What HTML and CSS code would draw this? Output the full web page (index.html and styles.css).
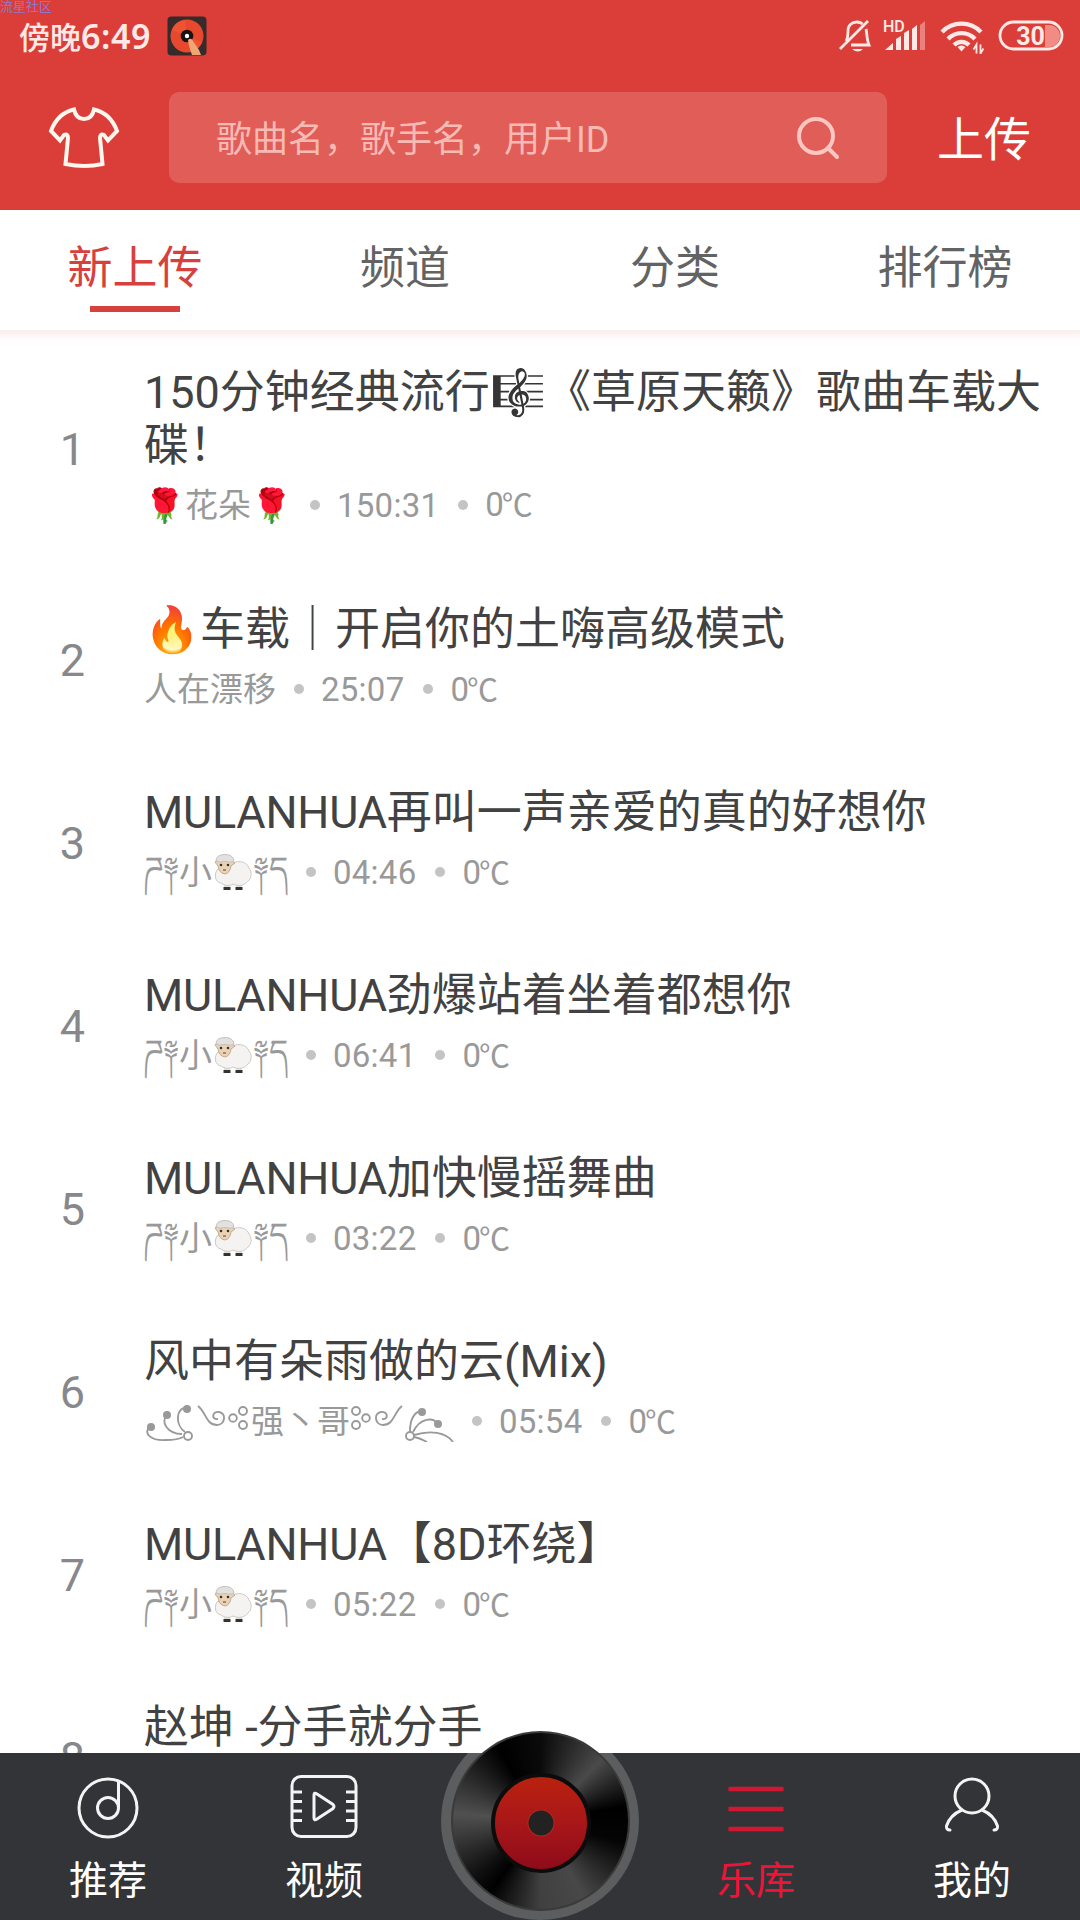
FILE: index.html
```
<!DOCTYPE html>
<html lang="zh-CN">
    <head>
        <meta charset="UTF-8" />
        <meta name="viewport" content="width=device-width, initial-scale=1.0" />
        <title>新上传</title>
        <link rel="stylesheet" href="styles.css">
    </head>
    <body>
        <span class="watermark">流星社区</span>
        <header class="header">
            <div class="status-bar">
                <span class="clock">傍晚<b>6:49</b></span>
                <svg class="app-badge" width="40" height="40" viewBox="0 0 40 40">
                    <rect x="0.5" y="0.5" width="39" height="39" rx="4" fill="#352b2b" />
                    <circle cx="20" cy="20" r="16.5" fill="#e8492e" />
                    <path d="M20 20 L5 14 A16.5 16.5 0 0 1 18 4Z M20 20 L35 26 A16.5 16.5 0 0 1 27 35Z" fill="#ee5333" />
                    <circle cx="20" cy="20" r="6.3" fill="#181414" />
                    <circle cx="20" cy="20" r="2.2" fill="#fff" />
                    <path d="M21 24 q3 -3 5 1 l6 9 l2 5 h-9 l-3 -9z" fill="#f0a575" />
                </svg>
                <svg class="status-icons" width="226" height="36" viewBox="0 0 226 36" fill="none" stroke="#ffe9e6" stroke-width="2.8">
                    <!-- muted bell -->
                    <path d="M7 23 c2-3 2-6 2-10 c0-6 4-9 9-9 c2 0 4 .6 5.500 2 M27 11 c1 3 .5 10 3 16 H12 M1 31 L29 3" />
                    <path d="M13 31 h11 q-5 5-11 0z" fill="#ffe9e6" stroke="none" />
                    <!-- signal -->
                    <text x="44" y="14" class="hd">HD</text>
                    <g fill="#ffe9e6" stroke="none">
                        <path d="M46 32 l8 -7 v7z M57 32 v-11 l5-3 v14z M65 32 v-17 l5-3 v20z M73 32 v-21 l5-4 v25z" />
                        <path d="M81 32 v-25 l5-4 v29z" opacity="0.4" />
                    </g>
                    <!-- wifi -->
                    <path d="M103 14 a27 27 0 0 1 39 0" stroke-width="4.200" />
                    <path d="M109 21 a18.500 18.500 0 0 1 27 0" stroke-width="4.200" />
                    <path d="M115 27 a10.500 10.500 0 0 1 15 0" stroke-width="4.200" />
                    <path d="M118.500 29 a6 6 0 0 1 8 0 l-4 4.500z" fill="#ffe9e6" stroke="none" />
                    <path d="M137.500 35.500 v-9 l-3 5 M141.500 26.500 v9 l3-5" stroke-width="1.800" />
                    <!-- battery -->
                    <path d="M206 7 h4 a11 11 0 0 1 0 22 h-4z" fill="#f08c84" stroke="none" />
                    <rect x="161" y="4" width="62" height="27" rx="13.500" />
                    <text x="191.500" y="27" class="battery">30</text>
                </svg>
            </div>
            <div class="toolbar">
                <svg class="shirt" width="72" height="62" viewBox="0 0 72 62" fill="none" stroke="#fff6ee" stroke-width="4">
                    <path d="M26 2.500 C15 5 7 13 3 24 L12 33.500 L16 28 Q20 26 20 31 L17.500 57 Q37 61 54.500 57 L52 31 Q52 26 56 28 L60 33.500 L69 24 C65 13 57 5 46 2.500 Q44 12 36 12 Q28 12 26 2.500Z" />
                </svg>
                <div class="search">
                    <span>歌曲名，歌手名，用户ID</span>
                    <svg width="44" height="44" viewBox="0 0 44 44" fill="none" stroke="#fbc6c0" stroke-width="4" stroke-linecap="round">
                        <circle cx="20" cy="20" r="17" />
                        <path d="M32 32 L41 41" />
                    </svg>
                </div>
                <a class="upload">上传</a>
            </div>
        </header>

        <nav class="tabs">
            <a class="tab active">新上传</a>
            <a class="tab">频道</a>
            <a class="tab">分类</a>
            <a class="tab">排行榜</a>
        </nav>

        <main class="songs">
            <div class="song">
                <div class="num">1</div>
                <div class="info">
                    <div class="title">150分钟经典流行<span class="score">🎼</span>《草原天籁》歌曲车载大碟！</div>
                    <div class="meta"><span class="rose">🌹</span><span>花朵</span><span class="rose">🌹</span><i></i><span class="time">150:31</span><i></i><span>0<b>℃</b></span></div>
                </div>
            </div>
            <div class="song">
                <div class="num">2</div>
                <div class="info">
                    <div class="title">🔥车载｜开启你的土嗨高级模式</div>
                    <div class="meta"><span>人在漂移</span><i></i><span class="time">25:07</span><i></i><span>0<b>℃</b></span></div>
                </div>
            </div>
            <div class="song">
                <div class="num">3</div>
                <div class="info">
                    <div class="title"><span class="latin">MULANHUA</span>再叫一声亲爱的真的好想你</div>
                    <div class="meta"><span class="wheat">ཌ༈</span><span>小</span><svg class="sheep" width="41" height="38" viewBox="0 0 41 38"><use href="#sheep" /></svg><span class="wheat">༈ད</span><i></i><span class="time">04:46</span><i></i><span>0<b>℃</b></span></div>
                </div>
            </div>
            <div class="song">
                <div class="num">4</div>
                <div class="info">
                    <div class="title"><span class="latin">MULANHUA</span>劲爆站着坐着都想你</div>
                    <div class="meta"><span class="wheat">ཌ༈</span><span>小</span><svg class="sheep" width="41" height="38" viewBox="0 0 41 38"><use href="#sheep" /></svg><span class="wheat">༈ད</span><i></i><span class="time">06:41</span><i></i><span>0<b>℃</b></span></div>
                </div>
            </div>
            <div class="song">
                <div class="num">5</div>
                <div class="info">
                    <div class="title"><span class="latin">MULANHUA</span>加快慢摇舞曲</div>
                    <div class="meta"><span class="wheat">ཌ༈</span><span>小</span><svg class="sheep" width="41" height="38" viewBox="0 0 41 38"><use href="#sheep" /></svg><span class="wheat">༈ད</span><i></i><span class="time">03:22</span><i></i><span>0<b>℃</b></span></div>
                </div>
            </div>
            <div class="song">
                <div class="num">6</div>
                <div class="info">
                    <div class="title">风中有朵雨做的云(Mix)</div>
                    <div class="meta">
                        <svg width="107" height="40" viewBox="0 0 107 40"><use href="#flourish-left" /></svg>
                        <span>强丶哥</span>
                        <svg width="104" height="40" viewBox="0 0 104 40"><use href="#flourish-right" /></svg>
                        <i></i><span class="time">05:54</span><i></i><span>0<b>℃</b></span>
                    </div>
                </div>
            </div>
            <div class="song">
                <div class="num">7</div>
                <div class="info">
                    <div class="title"><span class="latin">MULANHUA</span>【8D环绕】</div>
                    <div class="meta"><span class="wheat">ཌ༈</span><span>小</span><svg class="sheep" width="41" height="38" viewBox="0 0 41 38"><use href="#sheep" /></svg><span class="wheat">༈ད</span><i></i><span class="time">05:22</span><i></i><span>0<b>℃</b></span></div>
                </div>
            </div>
            <div class="song">
                <div class="num">8</div>
                <div class="info">
                    <div class="title">赵坤 -分手就分手</div>
                    <div class="meta"></div>
                </div>
            </div>
        </main>

        <footer class="bottom-nav">
            <a class="nav-item">
                <svg width="64" height="64" viewBox="0 0 64 64" fill="none" stroke="#f4f4f4" stroke-width="3">
                    <circle cx="32" cy="33" r="29" />
                    <circle cx="32" cy="33" r="10.500" />
                    <path d="M42.500 33 V6" />
                </svg>
                <span>推荐</span>
            </a>
            <a class="nav-item">
                <svg width="68" height="64" viewBox="0 0 68 64" fill="none" stroke="#f4f4f4" stroke-width="3">
                    <rect x="2" y="1.500" width="64" height="60" rx="9" />
                    <path d="M3 17 h9 M3 26.500 h9 M3 36 h9 M3 45.500 h9 M56 17 h9 M56 26.500 h9 M56 36 h9 M56 45.500 h9" />
                    <path d="M24 20 Q24 17 27 19 L43 29.500 Q45 31.500 43 33.500 L27 44 Q24 46 24 43Z" />
                </svg>
                <span>视频</span>
            </a>
            <a class="nav-item">
                <div class="ring"></div>
                <div class="disc"><div class="label"></div></div>
            </a>
            <a class="nav-item current">
                <svg width="64" height="64" viewBox="0 0 64 64" stroke="#d21732" stroke-width="4.500">
                    <path d="M4.500 14 H59.500 M4.500 34 H59.500 M4.500 54 H59.500" />
                </svg>
                <span>乐库</span>
            </a>
            <a class="nav-item">
                <svg width="64" height="64" viewBox="0 0 64 64" fill="none" stroke="#f4f4f4" stroke-width="3" stroke-linecap="round">
                    <circle cx="32" cy="21" r="17" />
                    <path d="M22 35 Q10 40 6.500 51 Q6 55 10 55 M42 35 Q54 40 57.500 51 Q58 55 54 55" />
                </svg>
                <span>我的</span>
            </a>
        </footer>

        <svg width="0" height="0" class="defs">
            <g id="sheep">
                <path d="M12 28 h6 v8 h-6z M24 28 h6 v8 h-6z" fill="#e6e2dd" />
                <path d="M11.500 34 h7 v3 h-7z M23.500 34 h7 v3 h-7z" fill="#333" />
                <path d="M5 17 C2 22 3 29 9 30 C13 33 18 33 21 31 C27 34 33 32 36 28 C40 25 40 18 37 15 C35 9 27 7 21 10 Z" fill="#f4f3f1" stroke="#cfcac5" stroke-width="1" />
                <path d="M3 9 l3 -2 h13 l4 3 l-4 3 q-1 7-6 8 q-6-1-7-8z" fill="#ead3b4" stroke="#b79c7c" stroke-width="0.800" />
                <path d="M4 8 Q4 2 12 1.500 Q21 1 22 8 Q20 10 13 8.500 Q7 10 4 8Z" fill="#e3e1df" stroke="#bbb6b1" stroke-width="0.800" />
                <circle cx="9" cy="12" r="1.300" fill="#333" />
                <circle cx="16" cy="12" r="1.300" fill="#333" />
                <path d="M11 17 h3" stroke="#7d5d46" stroke-width="1.300" />
            </g>
            <g id="flourish-left" fill="none" stroke="#999" stroke-width="1.900">
                <path d="M6 24 C-2 32 8 39 22 38 Q34 38 39 35 M24 12 C15 20 24 32 38 32 M44 5 C30 6 32 24 41 30" />
                <circle cx="44" cy="34" r="4" />
                <path d="M54 4 C62 10 62 23 73 23 C81 23 83 11 75 10 C68 9 67 18 74 17" />
                <circle cx="89" cy="16" r="3.800" />
                <circle cx="99" cy="9" r="4" />
                <circle cx="99" cy="23" r="4" />
                <g fill="#999" stroke="none">
                    <circle cx="7" cy="25" r="4" />
                    <circle cx="23" cy="13" r="4" />
                    <circle cx="43" cy="7" r="4" />
                </g>
            </g>
            <g id="flourish-right" fill="none" stroke="#999" stroke-width="1.900">
                <circle cx="6" cy="9" r="4" />
                <circle cx="6" cy="23" r="4" />
                <circle cx="16" cy="16" r="3.800" />
                <path d="M52 4 C44 10 44 23 33 23 C25 23 23 11 31 10 C38 9 39 18 32 17" />
                <circle cx="60" cy="34" r="4" />
                <path d="M60 29 C60 18 64 10 71 9 M63 30 C70 16 83 14 89 23 M64 33 C80 28 96 30 103 40 M64 35 Q70 36 77 40" />
                <g fill="#999" stroke="none">
                    <circle cx="72" cy="10" r="4" />
                    <circle cx="88" cy="22" r="4" />
                </g>
            </g>
        </svg>
    </body>
</html>
```
FILE: styles.css
```
* {
    box-sizing: border-box;
}

body {
    margin: 0;
    height: 1920px;
    overflow: hidden;
    display: flex;
    flex-direction: column;
    font-family: Roboto, "Noto Sans CJK SC", sans-serif;
    background-color: #fff;
}

svg {
    display: block;
    flex: none;
}

.defs {
    position: absolute;
}

.watermark {
    position: absolute;
    left: 0;
    top: 0;
    font-size: 13px;
    line-height: 13px;
    color: #8b78cc;
}

/* header */

.header {
    flex: none;
    height: 210px;
    background-color: #db3e38;
}

.status-bar {
    height: 72px;
    display: flex;
    align-items: center;
    padding: 0 15px 0 19px;
}

.clock {
    width: 148px;
    margin-top: -1px;
    font-family: "Noto Sans CJK SC", sans-serif;
    font-size: 31px;
    font-weight: 500;
    line-height: 40px;
    color: #ffe9e6;
    white-space: nowrap;
}

.clock b {
    font-family: "Noto Sans", sans-serif;
    font-size: 34px;
    font-weight: 600;
    letter-spacing: 0.6px;
}

.status-icons {
    margin-left: auto;
}

.status-icons text {
    font-family: Roboto, sans-serif;
    fill: #ffe9e6;
    stroke: none;
}

.hd {
    font-size: 16px;
    font-weight: 500;
}

.battery {
    font-size: 25px;
    font-weight: 700;
    text-anchor: middle;
}

.toolbar {
    display: flex;
    align-items: center;
    height: 131px;
}

.shirt {
    margin-left: 48px;
}

.search {
    display: flex;
    align-items: center;
    justify-content: space-between;
    width: 718px;
    height: 91px;
    margin-left: 49px;
    padding: 0 47px;
    border-radius: 10px;
    font-size: 36px;
    color: #f6bab5;
    background-color: #e15d57;
}

.search span {
    margin-top: -4px;
}

.upload {
    margin: 4px 0 0 50px;
    font-size: 47px;
    line-height: 60px;
    color: #fff;
}

/* tabs */

.tabs {
    flex: none;
    display: grid;
    grid-template-columns: repeat(4, 1fr);
    height: 120px;
}

.tab {
    display: flex;
    flex-direction: column;
    align-items: center;
    padding-top: 31px;
    font-size: 45px;
    line-height: 56px;
    color: #636363;
}

.tab.active {
    color: #d6403d;
}

.tab.active::after {
    content: "";
    width: 90px;
    height: 6px;
    margin-top: 9px;
    background-color: #d6403d;
}

/* song list */

.songs {
    flex: 1;
    min-height: 0;
    overflow: hidden;
    background-image: linear-gradient(#faeeee, #fff 12px);
}

.song {
    display: flex;
    align-items: center;
    height: 183px;
    padding: 32px 36px 30px 0;
}

.song:first-child {
    height: 234px;
    padding: 35px 36px 38px 0;
}

.num {
    width: 144px;
    padding: 7px 0 0 1px;
    text-align: center;
    font-size: 45px;
    color: #87888c;
}

.info {
    flex: 1;
}

.title {
    font-size: 45px;
    line-height: 53px;
    color: #424242;
}

.latin {
    letter-spacing: -0.25px;
}

.score {
    filter: grayscale(1) brightness(0.5);
}

.meta {
    display: flex;
    align-items: center;
    height: 40px;
    margin-top: 14px;
    font-size: 33px;
    line-height: 40px;
    color: #999;
    white-space: nowrap;
}

.meta i {
    width: 10px;
    height: 10px;
    margin: -2px 17px 0 18px;
    border-radius: 50%;
    background-color: #c4c4c4;
}

.meta i:last-of-type {
    margin: -2px 17px 0 19px;
}

.time {
    letter-spacing: 0.25px;
}

.meta b {
    font-size: 31px;
    font-weight: 400;
    margin-left: -2px;
}

.wheat {
    margin-top: -9px;
}

.rose {
    filter: brightness(1.2);
}

.sheep {
    margin-top: -2px;
}

/* bottom nav */

.bottom-nav {
    flex: none;
    display: grid;
    grid-template-columns: repeat(5, 1fr);
    height: 167px;
    background-color: #323437;
}

.nav-item {
    position: relative;
    display: flex;
    flex-direction: column;
    align-items: center;
    padding-top: 22px;
    font-size: 39px;
    line-height: 50px;
    color: #fff;
}

.nav-item span {
    margin-top: 17px;
}

.nav-item.current {
    color: #ee1437;
}

.ring {
    position: absolute;
    left: 9px;
    top: -31px;
    width: 198px;
    height: 198px;
    border-radius: 50%;
    background-color: #5c5d5f;
    clip-path: inset(31px 0 0 0);
}

/* the record sticks out above the bar */
.disc {
    position: absolute;
    left: 19px;
    top: -22px;
    display: flex;
    align-items: center;
    justify-content: center;
    width: 179px;
    height: 180px;
    padding-top: 3px;
    border: 2px solid #3a3a3a;
    border-radius: 50%;
    background-image: conic-gradient(#0a0a0a, #4a4a4a 45deg, #000 80deg, #050505 105deg, #484848 150deg, #404040 180deg, #000 215deg, #101010 230deg, #505050 275deg, #000 330deg, #0a0a0a);
}

.label {
    width: 100px;
    height: 100px;
    border: 4px solid #0c0c0c;
    border-radius: 50%;
    background-image: radial-gradient(circle, #222 12px, #b5261c 13px, transparent 14px), linear-gradient(#ba210e, #a81719 50%, #8e0b1a);
}
```
